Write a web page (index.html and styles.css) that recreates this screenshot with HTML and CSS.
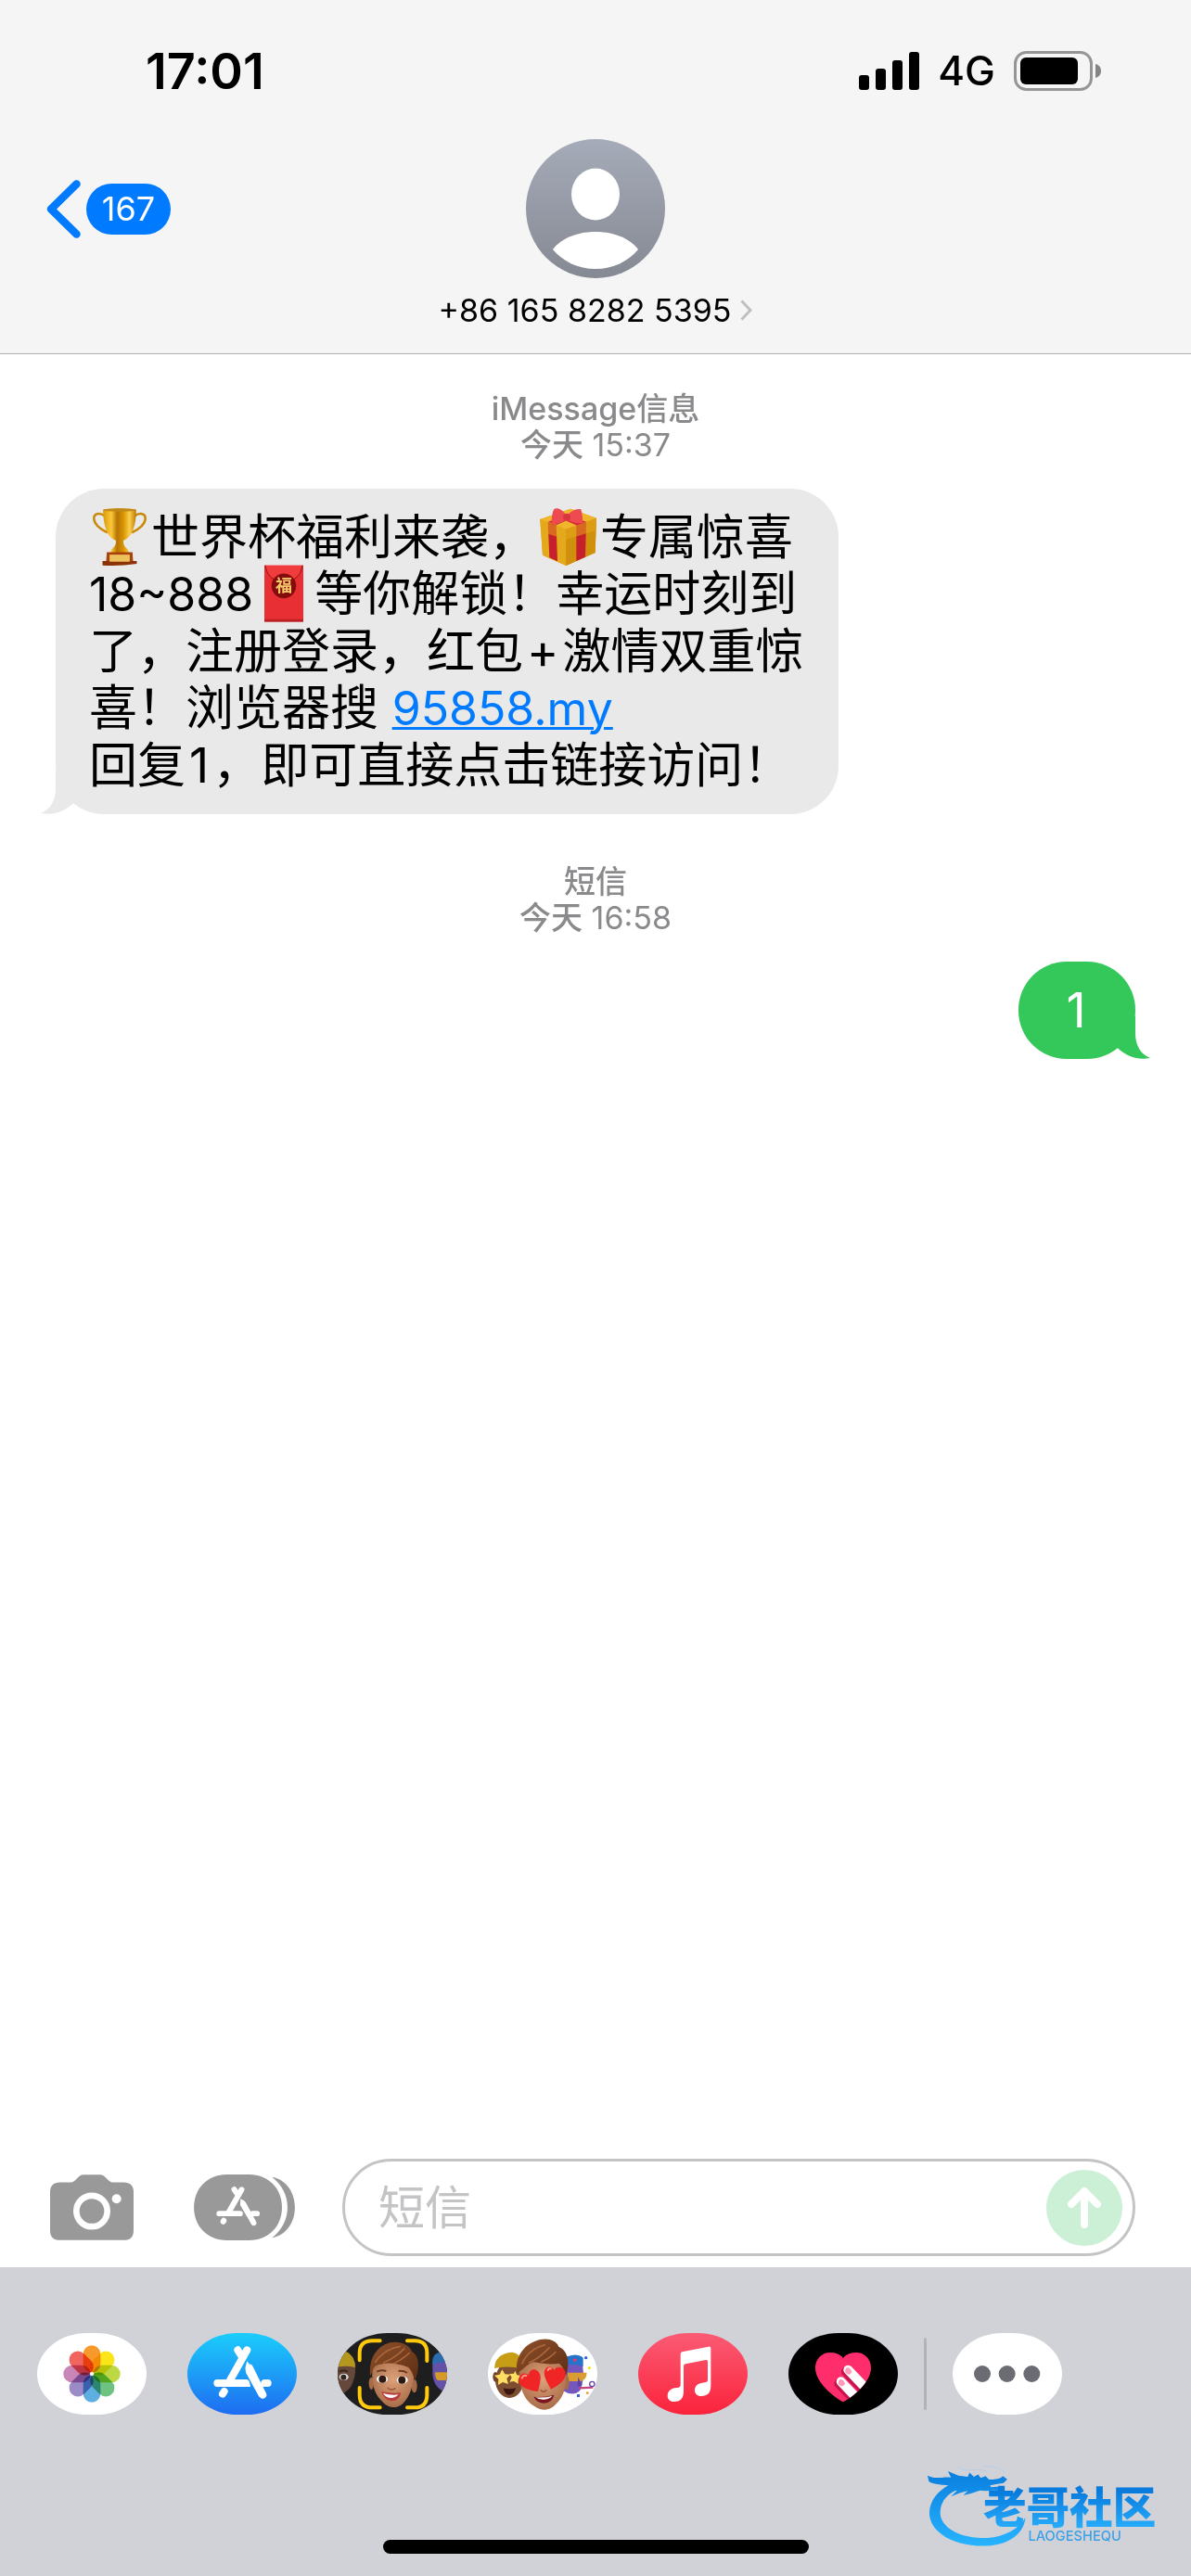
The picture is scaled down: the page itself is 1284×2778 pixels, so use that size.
FILE: index.html
```html
<!DOCTYPE html>
<html lang="zh-CN">
<head>
<meta charset="utf-8">
<meta name="viewport" content="width=device-width, initial-scale=1">
<title>信息</title>
<link rel="stylesheet" href="styles.css">
</head>
<body>
<header class="top">
  <div class="status">
    <span class="clock">17:01</span>
    <div class="status-right">
      <svg class="signal" viewBox="0 0 65 41" aria-hidden="true">
        <rect x="0" y="25" width="11" height="16" rx="3"/><rect x="18" y="18" width="11" height="23" rx="3"/><rect x="36" y="9" width="11" height="32" rx="3"/><rect x="54" y="0" width="11" height="41" rx="3"/>
      </svg>
      <span class="network">4G</span>
      <svg class="battery" viewBox="0 0 94 43" aria-hidden="true">
        <rect x="1.5" y="1.5" width="82" height="40" rx="12" fill="none" stroke="#959595" stroke-width="3"/>
        <rect x="7" y="7" width="62" height="29" rx="6"/>
        <path d="M88 14c4 1 6 4 6 7.500s-2 6.500-6 7.500z" fill="#858585"/>
      </svg>
    </div>
  </div>
  <nav class="nav">
    <button class="back" type="button" aria-label="返回">
      <svg class="back-arrow" viewBox="0 0 37 63" aria-hidden="true"><path d="M32.500 4.500 5 31.500l27.500 27" fill="none" stroke="#007aff" stroke-width="8.500" stroke-linecap="round" stroke-linejoin="round"/></svg>
      <span class="badge">167</span>
    </button>
    <button class="contact" type="button">
      <svg class="avatar" viewBox="0 0 150 150" aria-hidden="true">
        <defs><linearGradient id="av" x1="0" y1="0" x2="0" y2="1"><stop offset="0" stop-color="#a5abb8"/><stop offset="1" stop-color="#858993"/></linearGradient></defs>
        <circle cx="75" cy="75" r="75" fill="url(#av)"/>
        <ellipse cx="75" cy="59.500" rx="26" ry="28" fill="#fff"/>
        <path d="M29 119c9-12 26-19 46-19s37 7 46 19c-11 13-27 21-46 21s-35-8-46-21z" fill="#fff"/>
      </svg>
      <span class="number">+86 165 8282 5395
        <svg class="more-arrow" viewBox="0 0 13 23" aria-hidden="true"><path d="M1.500 1.500 11 11.500 1.500 21.500" fill="none" stroke="#bfbfc1" stroke-width="3"/></svg>
      </span>
    </button>
    <span class="nav-end"></span>
  </nav>
</header>

<main class="thread">
  <div class="stamp"><strong>iMessage信息</strong><span><b>今天</b> 15:37</span></div>
  <div class="bubble incoming">
    <svg class="tail tail-left" viewBox="42 1290 108 138" aria-hidden="true"><path d="M90 1290V1345C90 1385 72 1414 42 1425C82 1433 118 1420 148 1392V1290Z" fill="#e9e9e9"/></svg>
    <p class="text"><svg class="emoji trophy" viewBox="210 444 180 188" role="img" aria-label="奖杯">
      <defs><linearGradient id="gold"><stop offset="0" stop-color="#d99a0c"/><stop offset=".25" stop-color="#fbc938"/><stop offset=".42" stop-color="#b87404"/><stop offset=".62" stop-color="#d99605"/><stop offset=".8" stop-color="#fdd04c"/><stop offset="1" stop-color="#b97805"/></linearGradient></defs>
      <path d="M252 470c-18-14-38-8-36 10 2 20 20 32 44 44M348 470c18-14 38-8 36 10-2 20-20 32-44 44" fill="none" stroke="#c98a0a" stroke-width="8"/>
      <path d="M246 449c34-6 74-6 108 0 0 50-12 90-42 101 0 14 4 20 14 28 4 4 4 10 2 14h-56c-2-4-2-10 2-14 10-8 14-14 14-28-30-11-42-51-42-101z" fill="url(#gold)"/>
      <ellipse cx="300" cy="450" rx="54" ry="5" fill="#c28a18"/>
      <path d="M258 588h84l2 30h-88z" fill="#a9430d"/><path d="M244 617h112v9q-56 8-112 5z" fill="#8d3207"/><path d="M267 596h66v23h-66z" fill="#edc15c"/>
    </svg>世界杯福利来袭，<svg class="emoji gift" viewBox="314 446 183 186" role="img" aria-label="礼物">
      <path d="M315 482l98-34 84 30-4 112-94 42-76-34z" fill="#d89a12"/>
      <path d="M315 482l84 28v122l-76-34z" fill="#e5aa1c"/><path d="M399 510l98-32-4 112-94 42z" fill="#d0900c"/>
      <path d="M315 482l98-34 84 30-98 36z" fill="#f0b62b"/>
      <path d="M340 492l27 9 4 117-26-12zM432 502l32-12-3 114-29 13z" fill="#c5202b"/>
      <path d="M340 490l85-30 20 6-76 34zM464 490l-88-30-20 8 78 34z" fill="#d72b35"/>
      <path d="M315 482l84 32v34l-82-26zM497 478l-98 36v34l96-30z" fill="#e5a51a" opacity=".55"/>
      <path d="M401 472c-14-24-32-30-42-22-6 16-8 36-6 46 16 4 34-4 48-14 14 10 34 14 52 12 0-14-2-32-6-44-14-4-32 4-46 22z" fill="#ee4b50"/><circle cx="401" cy="475" r="12" fill="#d93740"/>
    </svg>专属惊喜<br><span class="latin">18~888</span><svg class="emoji envelope" viewBox="774 628 126 185" role="img" aria-label="红包">
      <path d="M774 630h126v182H774z" fill="#e83034"/><path d="M774 630h126c-6 28-20 38-38 46h-50c-18-8-32-18-38-46z" fill="#f03c3c"/><path d="M777 630c4 24 14 38 30 46M897 630c-4 24-14 38-30 46" fill="none" stroke="#8e0e10" stroke-width="3"/>
      <path d="M774 804h126v8H774z" fill="#ba2025"/><circle cx="837" cy="696" r="40" fill="#850c0c"/><text class="fu" x="837" y="716" text-anchor="middle">福</text>
    </svg>等你解锁！幸运时刻到<br>了，注册登录，红包<span class="spaced">+</span>激情双重惊<br>喜！浏览器搜 <a class="latin" href="http://95858.my">95858.my</a><br>回复<span class="spaced">1</span>，即可直接点击链接访问！</p>
  </div>
  <div class="stamp later"><strong>短信</strong><span><b>今天</b> 16:58</span></div>
  <div class="bubble outgoing">
    <svg class="tail tail-right" viewBox="42 1290 108 138" aria-hidden="true"><path d="M90 1290V1345C90 1385 72 1414 42 1425C82 1433 118 1420 148 1392V1290Z" fill="#34c759"/></svg>
    <p class="text">1</p>
  </div>
</main>

<form class="compose">
  <button class="tool" type="button" aria-label="相机">
    <svg class="camera" viewBox="162 137 270 212" aria-hidden="true"><path d="M194 162h35c16 0 22-25 42-25h52c20 0 26 25 42 25h35q32 0 32 32v123q0 32-32 32H194q-32 0-32-32V194q0-32 32-32z" fill="#999"/><circle cx="297" cy="255" r="50" fill="none" stroke="#fff" stroke-width="20"/><circle cx="377" cy="215" r="15" fill="#fff"/></svg>
  </button>
  <button class="tool" type="button" aria-label="App">
    <svg class="apps" viewBox="626 137 328 214" aria-hidden="true">
      <path d="M733 137h72c64 0 107 46 107 107s-43 107-107 107h-72c-64 0-107-46-107-107s43-107 107-107z" fill="#999"/>
      <path d="M880 145c44 8 74 48 74 99s-30 91-74 99c30-24 50-58 50-99s-20-75-50-99z" fill="#999"/>
      <g stroke="#fff" stroke-width="18" stroke-linecap="round" fill="none"><path d="M781 186l-42 74M757 186l10 14M708 264h68M817 264h14"/><path d="M721 290l2-3"/><path d="M786 232l34 62"/></g>
      <path d="M777 216l12 6 26 45-16 8-22-38z" fill="#fff"/>
    </svg>
  </button>
  <div class="field">
    <input class="entry" type="text" placeholder="短信" aria-label="短信">
    <button class="send" type="submit" aria-label="发送"><svg class="send-icon" viewBox="0 0 82 82" aria-hidden="true"><path d="M41 59V24M27 37l14-14 14 14" fill="none" stroke="#fff" stroke-width="8" stroke-linecap="round" stroke-linejoin="round"/></svg></button>
  </div>
</form>

<footer class="drawer">
  <div class="app-row">
    <button class="app" type="button" aria-label="照片"><svg viewBox="60 108 354 264" aria-hidden="true">
      <path d="M60 108h354v264H60z" fill="#fff"/>
      <g class="petals" transform="translate(237 240)">
        <rect x="-28" y="-92" width="56" height="88" rx="28" fill="#f79a2b"/>
        <rect x="-28" y="-92" width="56" height="88" rx="28" fill="#fae51b" transform="rotate(45)"/>
        <rect x="-28" y="-92" width="56" height="88" rx="28" fill="#bcd843" transform="rotate(90)"/>
        <rect x="-28" y="-92" width="56" height="88" rx="28" fill="#6fc382" transform="rotate(135)"/>
        <rect x="-28" y="-92" width="56" height="88" rx="28" fill="#5faee0" transform="rotate(180)"/>
        <rect x="-28" y="-92" width="56" height="88" rx="28" fill="#9b8cc8" transform="rotate(225)"/>
        <rect x="-28" y="-92" width="56" height="88" rx="28" fill="#ca85b8" transform="rotate(270)"/>
        <rect x="-28" y="-92" width="56" height="88" rx="28" fill="#f0655f" transform="rotate(315)"/>
      </g><circle cx="237" cy="240" r="6" fill="#fff"/>
    </svg></button>
    <button class="app" type="button" aria-label="App Store"><svg viewBox="545 107 354 264" aria-hidden="true">
      <defs><linearGradient id="st" x1="0" y1="0" x2="0" y2="1"><stop offset="0" stop-color="#1bcdfb"/><stop offset="1" stop-color="#1e6cf1"/></linearGradient></defs>
      <path d="M545 107h354v265H545z" fill="url(#st)"/>
      <g stroke="#fff" stroke-width="24" stroke-linecap="round" fill="none"><path d="M738 162l-54 96M708 162l14 22M642 269h92M795 269h10M659 304l5-8M746 220l43 87"/></g>
      <path d="M739 198l62 107-24 8-42-76q-6-20 4-39zM734 257q14 4 15 24h-15z" fill="#fff"/>
    </svg></button>
    <button class="app" type="button" aria-label="拟我表情"><svg viewBox="69 107 354 264" aria-hidden="true">
      <defs><radialGradient id="skin" cx=".5" cy=".4" r=".6"><stop offset="0" stop-color="#dca17a"/><stop offset="1" stop-color="#a96d49"/></radialGradient><linearGradient id="hair" x1="0" y1="0" x2="1" y2="1"><stop offset="0" stop-color="#8f512a"/><stop offset="1" stop-color="#5e2d14"/></linearGradient></defs>
      <path d="M69 107h354v265H69z" fill="#1e1e1e"/>
      <path d="M60 200h66q4 50-14 80-20 28-52 26z" fill="#65483a"/><path d="M60 166h36q28 12 30 52-30-8-66 0z" fill="#b5971e"/><ellipse cx="89" cy="249" rx="15" ry="11" fill="#ddd"/><circle cx="88" cy="250" r="9" fill="#332721"/><path d="M74 232q14-8 28 0" fill="none" stroke="#35231c" stroke-width="5"/>
      <path d="M376 200h50v100q-46-10-50-60z" fill="#6451a8"/><path d="M376 206q-4-38 36-38h14v38q-26-12-50 4z" fill="#2a6cae"/><path d="M384 234h44v26h-36q-8-8-8-26z" fill="#d59a28"/>
      <ellipse cx="178" cy="270" rx="8" ry="20" fill="#a66b48"/><ellipse cx="317" cy="278" rx="9" ry="22" fill="#a66b48"/>
      <path d="M182 215c-4 44 2 84 26 108 22 26 46 32 70 14 26-22 38-66 40-116-30-26-104-36-136-6z" fill="url(#skin)"/>
      <path d="M174 246c-4-52 14-84 48-102 34-16 76-6 88 24 28 16 22 62 8 94-4-20-10-34-20-44-38-16-76-18-104-6-12 8-12 22-20 34z" fill="url(#hair)"/>
      <path d="M190 202c20-30 44-46 82-52M216 204c30-12 50-28 70-48M250 206c22-10 38-22 52-36" fill="none" stroke="#a9663a" stroke-width="5"/>
      <path d="M196 232q14-8 30-2M266 230q16-2 28 6" fill="none" stroke="#6b3a20" stroke-width="6"/>
      <ellipse cx="213" cy="256" rx="18" ry="12" fill="#fff"/><ellipse cx="278" cy="259" rx="18" ry="12" fill="#fff"/><circle cx="214" cy="256" r="12" fill="#2c1a12"/><circle cx="277" cy="259" r="12" fill="#2c1a12"/>
      <path d="M230 284q12 12 26 1" fill="none" stroke="#9b5b3c" stroke-width="5"/><path d="M210 296q32 8 64 4-6 28-32 27-22-2-32-31z" fill="#b93d3e"/><path d="M216 302q28 8 50 4-10 11-26 11-16-1-24-15z" fill="#fff"/>
      <path d="M140 195v-23q0-40 42-40h24M294 132h24q40 0 40 40v25M140 284v23q0 41 42 41h24M294 348h24q40 0 40-41v-23" fill="none" stroke="#ffc90e" stroke-width="12" stroke-linecap="round"/>
    </svg></button>
    <button class="app" type="button" aria-label="拟我表情贴纸"><svg viewBox="558 108 354 264" aria-hidden="true">
      <path d="M558 108h354v264H558z" fill="#fff"/>
      <ellipse cx="628" cy="260" rx="46" ry="58" fill="#7c4d31"/><ellipse cx="582" cy="250" rx="8" ry="16" fill="#704228"/><path d="M579 222q2-48 58-52 24 4 32 30v24q-46-12-90-2z" fill="#c79d16"/>
      <path d="M604 226l9 15 18 1-12 13 5 18-18-6-15 9 1-19-13-12 17-3zM646 230l6 14 14 2-10 12v14l-14-8-14 2 7-14-7-12 14-1z" fill="#ffdc62"/><path d="M608 286q20 6 40 0-4 22-22 22-14 0-18-22z" fill="#3c1712"/>
      <path d="M804 210h60q8 50-8 84-22 20-52 2z" fill="#7357be"/><path d="M808 186q40-16 58 2v28q-24-10-58-4z" fill="#2574cc"/><path d="M816 236h62q-2 26-22 28h-40z" fill="#d99d31"/><path d="M850 250l12 28-14 2" fill="#5b43a5"/>
      <path d="M852 286l46-2" stroke="#c4447c" stroke-width="7"/><circle cx="895" cy="273" r="8" fill="none" stroke="#6743a7" stroke-width="4"/><circle cx="875" cy="188" r="5" fill="#2d62d9"/><circle cx="886" cy="221" r="5" fill="#f5e51f"/><circle cx="880" cy="302" r="4" fill="#f28e25"/><rect x="846" y="306" width="9" height="9" fill="#3964d9"/><path d="M839 203l-7-9 7-4 7 3z" fill="#e7376b"/>
      <ellipse cx="812" cy="268" rx="9" ry="24" fill="#a66b48"/>
      <path d="M660 212c0 66 8 108 48 132 22 16 48 18 68-4 32-28 38-70 36-124-36-30-116-36-152-4z" fill="url(#skin)"/>
      <path d="M651 238c-6-52 22-90 60-104 34-14 68-4 76 18 34 14 36 60 22 96-4-20-10-34-20-42-40 6-64-2-84-4-24 8-30 24-54 36z" fill="url(#hair)"/>
      <path d="M668 208c14-34 44-54 76-62M690 204c32-12 52-34 68-50M730 202c22-10 38-22 48-34" fill="none" stroke="#a9663a" stroke-width="5"/>
      <path d="M720 298c-34-6-66-16-62-42 4-20 22-22 32-12 2-18 18-22 28-14 18 12 8 40 2 68zM762 290c-10-20-30-48-18-66 10-12 24-8 28 4 6-12 26-14 34 0 12 24-12 46-44 62z" fill="#f02525"/><path d="M668 254q5-12 14-8M752 228q4-8 10-5" stroke="#ff9a8b" stroke-width="6" stroke-linecap="round" fill="none"/>
      <path d="M728 292q10 12 20 0" fill="none" stroke="#9b5b3c" stroke-width="5"/><path d="M706 314q34 4 66-6-6 26-32 27-24 0-34-21z" fill="#7b1720"/><path d="M712 316q28 2 54-4-8 10-26 11-18 1-28-7z" fill="#fff"/>
    </svg></button>
    <button class="app" type="button" aria-label="音乐"><svg viewBox="84 107 354 264" aria-hidden="true">
      <defs><linearGradient id="mu" x1="0" y1="0" x2="0" y2="1"><stop offset="0" stop-color="#fb5b74"/><stop offset="1" stop-color="#fa233b"/></linearGradient></defs>
      <path d="M84 107h354v265H84z" fill="url(#mu)"/>
      <path d="M226 168l86-17q7-1 7 6v121c0 24-12 33-32 33-12 0-20-8-20-19 0-14 10-22 24-24l12-2q6-1 6-7v-59q0-7-6-6l-66 13q-6 1-6 7v82c0 24-12 33-32 33-12 0-20-8-20-19 0-14 10-23 24-25l12-2q6-1 6-8V176q0-7 5-8z" fill="#fff"/>
    </svg></button>
    <button class="app" type="button" aria-label="Digital Touch"><svg viewBox="570 107 354 264" aria-hidden="true">
      <path d="M570 107h354v265H570z"/>
      <defs><clipPath id="ht"><path d="M747 329c-12-3-90-56-90-109 0-28 20-50 48-50 18 0 33 6 42 18 9-12 24-18 42-18 28 0 48 22 48 50 0 53-78 106-90 109z"/></clipPath></defs>
      <g clip-path="url(#ht)"><path d="M640 160h220v180H640z" fill="#ff2d6b"/><path d="M734 270l70 74M757 232l90 94" stroke="#c4154c" stroke-width="32" stroke-linecap="round"/><path d="M740 264l80 84M763 226l90 94" stroke="#fff" stroke-width="30" stroke-linecap="round"/><path d="M753 230q2-12 10-12 8 4 12 12 0 8-8 11-12 0-14-11zM731 268q2-12 10-12 8 4 12 12 0 8-8 11-12 0-14-11z" fill="#ff9dbb"/></g>
    </svg></button>
    <span class="divider"></span>
    <button class="app" type="button" aria-label="更多"><svg viewBox="1101 108 354 264" aria-hidden="true"><path d="M1101 108h354v264h-354z" fill="#fff"/><g fill="#6b6b74"><circle cx="1197" cy="240" r="27"/><circle cx="1277" cy="240" r="27"/><circle cx="1357" cy="240" r="27"/></g></svg></button>
  </div>
  <svg class="watermark" viewBox="120 50 790 270" role="img" aria-label="老哥社区">
    <defs><linearGradient id="wm" gradientUnits="userSpaceOnUse" x1="0" y1="80" x2="0" y2="315"><stop offset="0" stop-color="#0a7fe0"/><stop offset="1" stop-color="#27b4ff"/></linearGradient><linearGradient id="wt" gradientUnits="userSpaceOnUse" x1="0" y1="140" x2="0" y2="258"><stop offset="0" stop-color="#087bdd"/><stop offset="1" stop-color="#27adfc"/></linearGradient></defs>
    <path d="M226 104C168 120 126 160 126 210c0 60 76 106 174 106 70 0 130-30 137-92-20 36-66 62-124 66-90 4-154-36-152-84 2-40 30-66 76-80z" fill="url(#wm)"/>
    <path d="M120 88c20 12 44 4 76 6l-10-20 34 14 30 4 6-14 14 14 14-8 8 12 16-6 10 10c20 2 36 0 46-10l14 10-12 12-24 4-20 4 4 6 44-4-10 16-24-2-30 2-16-2-30 10-24 6 14-14-24 6-30 12 20-20-26 4 20-18c-30-4-74-4-86-16z" fill="url(#wm)"/>
    <path d="M220 60c20 24 60 0 90 14M300 58c30 0 60 4 70 22" fill="none" stroke="#a9c8ea" stroke-width="2"/>
    <text class="wm-name" x="300" y="242" fill="url(#wt)">老哥社区</text>
    <text class="wm-latin" x="446" y="298" fill="#3da0e6">LAOGESHEQU</text>
  </svg>
  <div class="home-bar"></div>
</footer>
</body>
</html>
```
FILE: styles.css
```css
* { box-sizing: border-box; }

body {
  margin: 0;
  min-height: 100vh;
  display: flex;
  flex-direction: column;
  background: #fff;
  color: #000;
  font-family: Inter, "Noto Sans CJK SC", sans-serif;
}

button {
  border: 0;
  padding: 0;
  background: none;
  color: inherit;
  font: inherit;
  cursor: pointer;
}

svg { display: block; }

/* Status bar and contact header */
.top {
  background: #f5f5f5;
  border-bottom: 1px solid #b2b2b2;
  padding-bottom: 26px;
}

.status {
  height: 150px;
  padding: 46px 97px 0 157px;
  display: flex;
  justify-content: space-between;
  align-items: flex-start;
}

.clock {
  font-size: 54px;
  line-height: 62px;
  font-weight: 600;
}

.status-right {
  display: flex;
  align-items: center;
  gap: 20px;
  padding-top: 8px;
}

.signal { width: 65px; height: 41px; }
.network { font-size: 44px; line-height: 44px; font-weight: 500; }
.battery { width: 94px; height: 43px; }

.nav {
  display: grid;
  grid-template-columns: 1fr auto 1fr;
  align-items: start;
  padding: 0 50px;
}

.back {
  justify-self: start;
  display: flex;
  align-items: center;
  gap: 6px;
  margin-top: 44px;
}

.back-arrow { width: 37px; height: 63px; }

.badge {
  min-width: 91px;
  border-radius: 28px;
  background: #007aff;
  color: #fff;
  font-size: 36px;
  line-height: 55px;
  text-align: center;
}

.contact {
  display: flex;
  flex-direction: column;
  align-items: center;
  gap: 14px;
}

.avatar { width: 150px; height: 150px; }

.number {
  display: flex;
  align-items: center;
  gap: 10px;
  font-size: 34px;
  line-height: 41px;
}

.more-arrow { width: 13px; height: 23px; }

/* Conversation */
.thread {
  flex: 1;
  display: flex;
  flex-direction: column;
  padding: 39px 60px;
}

.stamp {
  display: flex;
  flex-direction: column;
  align-items: center;
  color: #8a8a8d;
  font-size: 34px;
  line-height: 39px;
}

.stamp strong { font-weight: 500; }
.stamp b { font-weight: 500; }
.later { margin-top: 53px; }

.bubble {
  position: relative;
  margin-top: 28px;
  padding: 22px 38px 22px 36px;
  border-radius: 52px;
}

.incoming { align-self: flex-start; background: #e9e9e9; }
.outgoing { align-self: flex-end; background: #34c759; color: #fff; min-width: 126px; text-align: center; }

.text {
  margin: 0;
  font-size: 52px;
  line-height: 61px;
  white-space: nowrap;
}

.latin { font-size: 50px; }
.spaced { margin: 0 4px; }
.text a { color: #007aff; text-decoration-thickness: 3px; }

.tail {
  position: absolute;
  bottom: 0;
  width: 36px;
  height: 46px;
}

.tail-left { left: -16px; }
.tail-right { right: -16px; transform: scaleX(-1); }

.emoji {
  display: inline-block;
  vertical-align: -4px;
  height: 62px;
  margin: -8px 4px -8px 3px;
}

.trophy { width: 60px; }
.gift { width: 61px; }
.envelope { width: 42px; margin: -8px 12px; }
.fu { font-size: 54px; font-weight: 700; fill: #f5c86a; }

/* Message entry */
.compose {
  display: flex;
  align-items: center;
  padding: 0 60px 12px 54px;
}

.camera { width: 90px; height: 71px; }
.apps { width: 109px; height: 71px; margin-left: 65px; }

.field {
  flex: 1;
  min-width: 0;
  display: flex;
  align-items: center;
  height: 105px;
  margin-left: 51px;
  padding: 0 11px 0 36px;
  border: 3px solid #c4c4c6;
  border-radius: 53px;
}

.entry {
  flex: 1;
  min-width: 0;
  border: 0;
  padding: 0;
  outline: 0;
  background: none;
  font: inherit;
  font-size: 50px;
}

.entry::placeholder { color: #c4c4c6; }

.send { border-radius: 50%; background: #cbf0d6; }
.send-icon { width: 82px; height: 82px; }

/* App drawer */
.drawer {
  position: relative;
  min-height: 333px;
  padding: 71px 40px 24px;
  display: flex;
  flex-direction: column;
  justify-content: space-between;
  background: #d1d2d8;
}

.app-row { display: flex; align-items: center; gap: 44px; }

.app {
  width: 118px;
  height: 88px;
  border-radius: 54px / 44px;
  overflow: hidden;
}

.app svg { width: 118px; height: 88px; }
.petals rect { mix-blend-mode: multiply; }

.divider {
  width: 3px;
  height: 78px;
  margin: 0 -16px;
  border-radius: 2px;
  background: #b2b3b8;
}

.watermark {
  position: absolute;
  right: 21px;
  bottom: 31px;
  width: 263px;
  height: 90px;
}

.wm-name { font-size: 140px; font-weight: 900; }
.wm-latin { font-size: 44px; font-weight: 500; }

.home-bar {
  align-self: center;
  width: 459px;
  height: 15px;
  border-radius: 8px;
  background: #000;
}
```
